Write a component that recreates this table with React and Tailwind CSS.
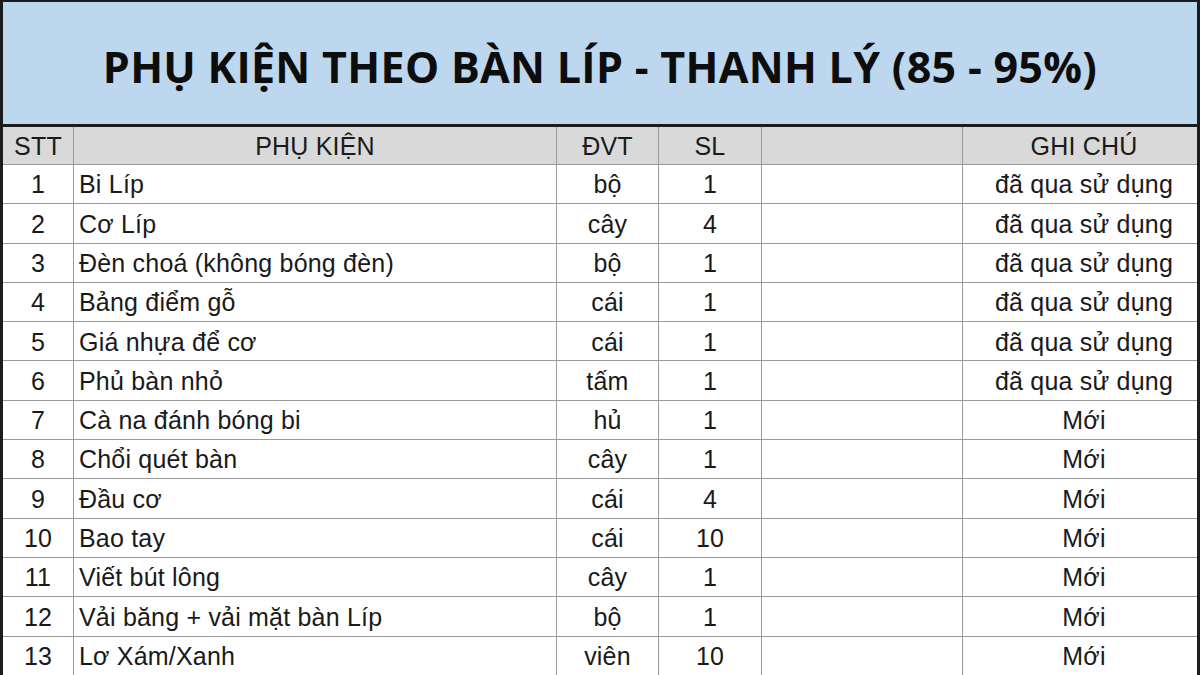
const rows = [
  ['1', 'Bi Líp', 'bộ', '1', 'đã qua sử dụng'],
  ['2', 'Cơ Líp', 'cây', '4', 'đã qua sử dụng'],
  ['3', 'Đèn choá (không bóng đèn)', 'bộ', '1', 'đã qua sử dụng'],
  ['4', 'Bảng điểm gỗ', 'cái', '1', 'đã qua sử dụng'],
  ['5', 'Giá nhựa để cơ', 'cái', '1', 'đã qua sử dụng'],
  ['6', 'Phủ bàn nhỏ', 'tấm', '1', 'đã qua sử dụng'],
  ['7', 'Cà na đánh bóng bi', 'hủ', '1', 'Mới'],
  ['8', 'Chổi quét bàn', 'cây', '1', 'Mới'],
  ['9', 'Đầu cơ', 'cái', '4', 'Mới'],
  ['10', 'Bao tay', 'cái', '10', 'Mới'],
  ['11', 'Viết bút lông', 'cây', '1', 'Mới'],
  ['12', 'Vải băng + vải mặt bàn Líp', 'bộ', '1', 'Mới'],
  ['13', 'Lơ Xám/Xanh', 'viên', '10', 'Mới'],
];

const cell = 'flex items-center pt-[2px] border-r border-b border-[#9a9a9a]';

export default function App() {
  return (
    <div className="w-[1200px] h-[675px] overflow-hidden bg-white border-l-[3px] border-r-[3px] border-t-[2px] border-[#1c1c1c]">
      {/* title */}
      <div className="h-[125px] bg-[#bdd7ee] border-b-[3px] border-[#1c1c1c] flex items-center justify-center">
        <h1 className="font-['Open_Sans',sans-serif] font-bold text-[43px] text-[#0d0d0d] tracking-[0.3px] pt-[8px]">
          PHỤ KIỆN THEO BÀN LÍP - THANH LÝ (85 - 95%)
        </h1>
      </div>

      {/* table */}
      <div className="grid grid-cols-[71px_483px_102px_103px_201px_234px] font-['Liberation_Sans',Arial,sans-serif] text-[25px] tracking-[0.2px] text-[#1a1a1a]">
        <div className={`${cell} h-[38px] bg-[#d9d9d9] justify-center`}>STT</div>
        <div className={`${cell} h-[38px] bg-[#d9d9d9] justify-center`}>PHỤ KIỆN</div>
        <div className={`${cell} h-[38px] bg-[#d9d9d9] justify-center`}>ĐVT</div>
        <div className={`${cell} h-[38px] bg-[#d9d9d9] justify-center`}>SL</div>
        <div className={`${cell} h-[38px] bg-[#d9d9d9] justify-center`}></div>
        <div className={`${cell} h-[38px] bg-[#d9d9d9] justify-center border-r-0 pl-[8px]`}>GHI CHÚ</div>

        {rows.map((r) => (
          <div key={r[0]} className="contents">
            <div className={`${cell} h-[39.3px] justify-center`}>{r[0]}</div>
            <div className={`${cell} h-[39.3px] pl-[5px]`}>{r[1]}</div>
            <div className={`${cell} h-[39.3px] justify-center`}>{r[2]}</div>
            <div className={`${cell} h-[39.3px] justify-center`}>{r[3]}</div>
            <div className={`${cell} h-[39.3px]`}></div>
            <div className={`${cell} h-[39.3px] justify-center border-r-0 pl-[8px]`}>{r[4]}</div>
          </div>
        ))}
      </div>
    </div>
  );
}
